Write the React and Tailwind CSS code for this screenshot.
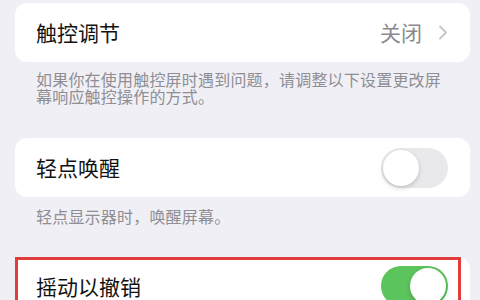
import React from 'react';

const FONT = { fontFamily: '"Noto Sans CJK SC", "Noto Sans", sans-serif' };

function Chevron() {
  return (
    <svg width="10" height="15" viewBox="0 0 10 15" fill="none">
      <path d="M2 1.5 L8 7.5 L2 13.5" stroke="#c5c5c8" strokeWidth="1.8" strokeLinecap="round" strokeLinejoin="round" />
    </svg>
  );
}

function Toggle({ on }) {
  return (
    <div
      className={`relative w-[67px] h-[40px] rounded-full flex items-center ${
        on ? 'bg-[#5cc45c] justify-end' : 'bg-[#e9e9eb] justify-start'
      } px-[2px]`}
    >
      <div className="w-[36px] h-[36px] rounded-full bg-white shadow-[0_2px_5px_rgba(0,0,0,0.18)]" />
    </div>
  );
}

function Card({ children, className = '' }) {
  return (
    <div className={`relative shrink-0 h-[59px] bg-white rounded-[12px] pl-[21px] pr-[22px] flex items-center justify-between ${className}`}>
      {children}
    </div>
  );
}

export default function App() {
  return (
    <div className="w-[480px] h-[300px] overflow-hidden bg-[#f0eff5] pl-[15px] pr-[10px] pt-[3px] flex flex-col" style={FONT}>
      {/* 触控调节 */}
      <Card>
        <span className="text-[21px] text-[#111] leading-none">触控调节</span>
        <div className="flex items-center gap-[16px]">
          <span className="text-[21px] text-[#8a8a8e] leading-none">关闭</span>
          <Chevron />
        </div>
      </Card>
      <p className="shrink-0 mt-[9px] px-[21px] text-[16px] leading-[16.5px] tracking-[0.2px] text-[#8e8e93]">
        如果你在使用触控屏时遇到问题，请调整以下设置更改屏幕响应触控操作的方式。
      </p>

      {/* 轻点唤醒 */}
      <Card className="mt-[34px]">
        <span className="text-[21px] text-[#111] leading-none">轻点唤醒</span>
        <Toggle on={false} />
      </Card>
      <p className="shrink-0 mt-[11px] px-[21px] text-[16px] leading-[16.5px] tracking-[0.2px] text-[#8e8e93]">
        轻点显示器时，唤醒屏幕。
      </p>

      {/* 摇动以撤销 */}
      <Card className="mt-[32px]">
        <span className="text-[21px] text-[#111] leading-none">摇动以撤销</span>
        <Toggle on />
        <div className="absolute left-0 top-0 right-[9px] bottom-[-20px] border-[3px] border-[#e23b3b] pointer-events-none" />
      </Card>
    </div>
  );
}
